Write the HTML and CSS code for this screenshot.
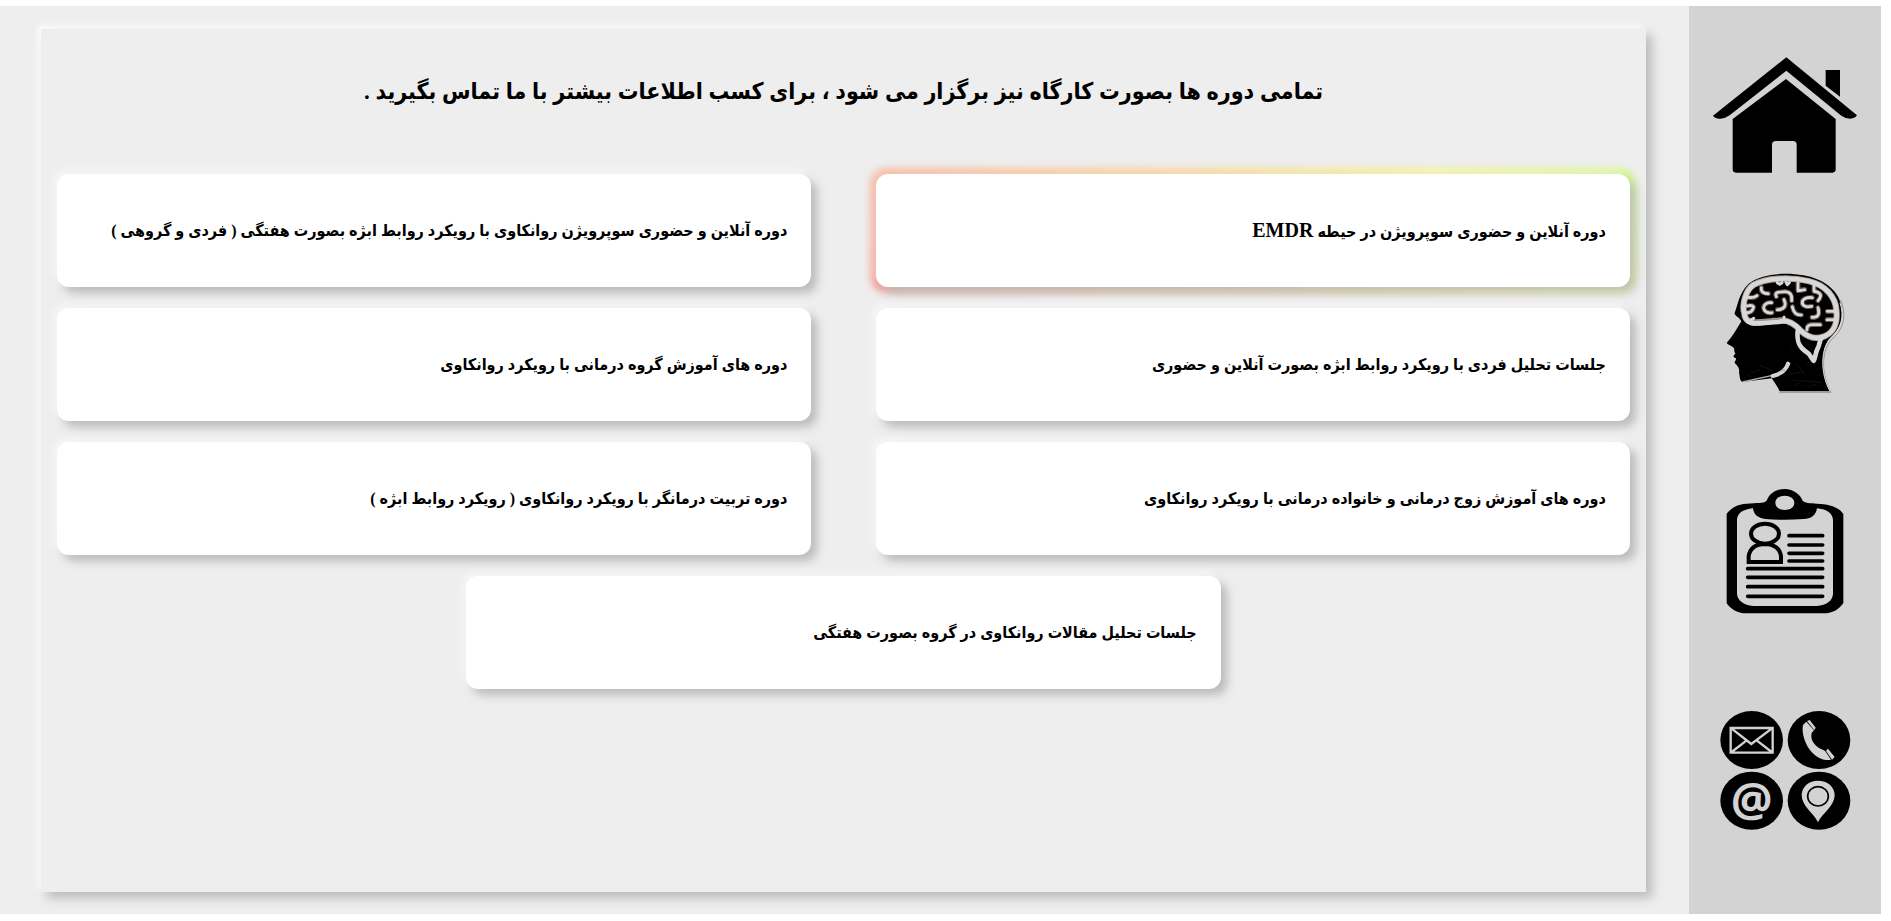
FILE: index.html
```html
<!DOCTYPE html>
<html lang="fa">
<head>
<meta charset="utf-8">
<title>دوره ها</title>
<link rel="stylesheet" href="styles.css">
</head>
<body>
<div class="page">
  <main class="content" dir="rtl">
    <section class="panel">
      <h1 class="title">تمامی دوره ها بصورت کارگاه نیز برگزار می شود ، برای کسب اطلاعات بیشتر با ما تماس بگیرید .</h1>
      <div class="cards">
        <article class="card card-active"><h2 class="card-text">دوره آنلاین و حضوری سوپرویژن در حیطه <span class="latin">EMDR</span></h2></article>
        <article class="card"><h2 class="card-text">دوره آنلاین و حضوری سوپرویژن روانکاوی با رویکرد روابط ابژه بصورت هفتگی ( فردی و گروهی )</h2></article>
        <article class="card"><h2 class="card-text">جلسات تحلیل فردی با رویکرد روابط ابژه بصورت آنلاین و حضوری</h2></article>
        <article class="card"><h2 class="card-text">دوره های آموزش گروه درمانی با رویکرد روانکاوی</h2></article>
        <article class="card"><h2 class="card-text">دوره های آموزش زوج درمانی و خانواده درمانی با رویکرد روانکاوی</h2></article>
        <article class="card"><h2 class="card-text">دوره تربیت درمانگر با رویکرد روانکاوی ( رویکرد روابط ابژه )</h2></article>
        <article class="card"><h2 class="card-text">جلسات تحلیل مقالات روانکاوی در گروه بصورت هفتگی</h2></article>
      </div>
    </section>
  </main>
  <nav class="sidebar">
    <a class="nav-link" href="#home" aria-label="خانه">
      <svg class="icon" viewBox="99 165 432 360">
        <path d="M319 172 531 346Q524 356 511 356Q496 356 484 347L319 212 149 346Q134 357 118 356Q104 355 99 347Z"/>
        <path d="M318 237 467 357V508Q467 518 457 518H350V434Q350 423 339 423H288Q276 423 276 434V518H168Q158 518 158 508V357Z"/>
        <path d="M437 210H480V290L437 257Z"/>
      </svg>
    </a>
    <a class="nav-link" href="#courses" aria-label="دوره ها">
      <svg class="icon" viewBox="99 69 432 360">
        <defs>
          <path id="folds" d="M244 113Q241 130 265 131M289 140Q282 125 305 126Q338 120 335 152M275 158C241 155 245 194 276 188M312 149C322 170 309 179 292 179M354 98V122L374 119M402 106V124Q434 129 414 152M397 143C356 138 358 178 395 169M337 170Q342 196 364 195M414 173Q423 204 396 202M231 137Q222 145 202 142M200 168Q226 163 219 176Q215 187 201 188M464 184H442M462 209H441M381 239Q380 224 395 224H421"/>
        </defs>
        <path d="M184 214C178 200 162 198 164 188C172 172 176 130 205 102C240 72 315 65 370 76C430 86 472 120 482 160C494 205 480 235 452 262C420 292 424 380 450 424H299C293 412 284 397 275 385L187 396C178 390 180 380 177 366C180 355 172 347 166 341C160 337 170 330 168 325C159 322 158 318 166 311C160 300 166 296 158 291C148 285 140 281 140 279C158 258 170 238 184 214Z"/>
        <path class="edge" d="M482 150C500 195 492 232 462 262C424 290 420 370 453 427H298"/>
        <path class="edge-light" d="M480 158C494 200 482 238 456 262C420 290 420 370 450 424"/>
        <use class="fold fold-rim" href="#folds"/>
        <use class="fold fold-shade" href="#folds"/>
        <path class="brain-rim" d="M193 190C185 165 197 120 220 105C255 84 330 80 385 93C440 105 467 145 469 180C474 220 461 252 424 262C400 268 382 260 364 244C345 222 325 207 295 212C260 213 222 225 204 212Q194 205 193 190Z"/>
        <path class="brain-line" d="M193 190C185 165 197 120 220 105C255 84 330 80 385 93C440 105 467 145 469 180C474 220 461 252 424 262C400 268 382 260 364 244C345 222 325 207 295 216C260 217 222 227 204 214Q194 205 193 190Z"/>
        <path class="brain-line" d="M353 244C350 275 357 292 378 305C392 312 394 326 401 332C407 325 405 310 413 295C420 285 416 275 425 263"/>
        <use class="fold" href="#folds"/>
        <path class="fold" d="M292 98 299 103 306 98M318 97 322 104 328 98M213 210 221 205M312 208V201"/>
        <path class="jaw-rim" d="M187 396L274 377C305 370 325 356 330 339"/>
        <path class="jaw" d="M278 378C302 373 318 360 324 341"/>
        <path class="scratch" d="M212 368L240 360M237 346L278 361M298 356L322 366M330 294L340 304M335 390L380 394 425 397M350 340L378 376M310 376L370 365M378 345L392 330M346 405L360 400M200 375L215 380M386 410L410 402"/>
      </svg>
    </a>
    <a class="nav-link" href="#resume" aria-label="رزومه">
      <svg class="icon" viewBox="99 63 432 360">
        <path fill-rule="evenodd" d="M140 131C160 106 184 101 222 100C246 99 259 98 262 88C270 68 290 57 314 57C341 57 362 75 367 91C373 100 391 100 411 101C448 103 475 110 490 132V400C476 418 462 427 440 430H190C168 427 150 414 140 400ZM219 115C186 119 172 130 171 150V372C173 392 190 405 220 408H410C440 405 457 394 459 372V150C458 130 441 118 411 115C408 136 393 147 370 147C333 150 293 150 256 147C234 144 221 135 219 115ZM314 77C298 77 286 86 286 98C286 111 298 120 314 120C331 120 343 111 343 98C343 86 331 77 314 77Z"/>
        <g class="sheet-figure"><ellipse cx="255" cy="191" rx="42" ry="30"/><path d="M206 276V258Q212 223 255 222Q298 224 303 258V276Z"/></g>
        <path class="sheet-lines" d="M327 197H428M327 225H428M327 250H428M327 273H428M203 296H428M203 322H428M203 350H428M203 379H428"/>
      </svg>
    </a>
    <a class="nav-link" href="#contact" aria-label="تماس با ما">
      <svg class="icon" viewBox="99 57 432 360">
        <ellipse cx="215" cy="150" rx="94" ry="87"/><ellipse cx="417" cy="150" rx="94" ry="87"/>
        <ellipse cx="215" cy="332" rx="94" ry="87"/><ellipse cx="417" cy="332" rx="94" ry="87"/>
        <path class="mail" d="M152 114H278V188H152ZM155 116 214 162 275 116M155 186 200 151M275 186 230 151"/>
        <path class="light" d="M369 105 379 95 402 121 395 129C389 150 406 172 430 180L436 184 453 209C435 214 405 204 385 173C371 150 365 123 369 105ZM381 93 389 90 407 113 403 120ZM438 182 444 176 464 201 456 209Z"/>
        <text class="at" x="215" y="377" text-anchor="middle">@</text>
        <path class="light" d="M414 397C402 371 365 348 365 316C365 290 387 272 414 272C442 272 464 290 464 316C464 348 426 371 414 397Z"/>
        <ellipse class="pin-ring" cx="414" cy="319" rx="31" ry="29"/>
      </svg>
    </a>
  </nav>
</div>
</body>
</html>
```
FILE: styles.css
```css
* { box-sizing: border-box; }

body {
  margin: 0;
  padding: 6px 10px 7px 0;
  background: #fff;
  color: #000;
  font-family: "Liberation Serif", "DejaVu Sans Condensed", "DejaVu Sans", serif;
}

.page {
  display: flex;
  min-height: calc(100vh - 13px);
  background: #eee;
}

.content {
  flex: 1;
  display: flex;
  padding: 23px 43px 22px 41px;
}

.panel {
  flex: 1;
  background: #eee;
  box-shadow: 6px 6px 10px #b8bcba, -3px -3px 6px #fff;
}

.title {
  margin: 0;
  padding: 43px 16px 62px;
  font-size: 23px;
  line-height: 40px;
  text-align: center;
}

.cards {
  display: flex;
  flex-wrap: wrap;
  justify-content: center;
  gap: 21px 4%;
  position: relative;
  z-index: 0;
}

.card {
  position: relative;
  display: flex;
  align-items: center;
  width: 47%;
  min-height: 113px;
  padding: 16px 24px;
  border-radius: 12px;
  background: #fff;
  box-shadow: 6px 6px 10px rgba(140, 148, 144, 0.55), -3px -3px 8px rgba(255, 255, 255, 0.7);
}

.card-active::before {
  content: "";
  position: absolute;
  z-index: -1;
  inset: -4px;
  border-radius: 14px;
  background: linear-gradient(45deg, #ff2d1a, #ffa500 50%, #f5f500 77%, #a8ff00);
  filter: blur(4px);
  opacity: 0.6;
}

.card-active {
  box-shadow: 6px 6px 10px rgba(186, 190, 188, 0.9), -3px -3px 8px rgba(255, 255, 255, 0.5);
}

.card-text {
  margin: 0;
  font-size: 16px;
  line-height: 24px;
}

.latin { font-size: 20px; }

.sidebar {
  display: flex;
  flex-direction: column;
  align-items: center;
  gap: 98px;
  width: 192px;
  padding: 49px 24px;
  background: #d3d3d3;
}

.nav-link { display: block; color: #000; }

.icon {
  display: block;
  width: 144px;
  height: 120px;
  overflow: visible;
}

.edge { fill: none; stroke: #a08f85; stroke-width: 3px; }
.edge-light { fill: none; stroke: #dcdcdc; stroke-width: 3px; }
.brain-line { fill: none; stroke: #d8d8d8; stroke-width: 14px; stroke-linejoin: round; stroke-linecap: round; }
.brain-rim { fill: none; stroke: #a3968e; stroke-width: 19px; }
.fold { fill: none; stroke: #d8d8d8; stroke-width: 9px; stroke-linecap: round; stroke-linejoin: round; }
.fold-rim { stroke: #8d817a; stroke-width: 14px; }
.fold-shade { stroke: #2c2521; stroke-width: 12px; }
.jaw { fill: none; stroke: #d3d3d3; stroke-width: 12px; stroke-linecap: round; }
.jaw-rim { fill: none; stroke: #b9aaa2; stroke-width: 4px; }
.scratch { fill: none; stroke: #333; stroke-width: 1px; }

.sheet-figure { fill: none; stroke: #000; stroke-width: 12px; }
.sheet-lines { fill: none; stroke: #000; stroke-width: 11px; stroke-linecap: round; }

.mail { fill: none; stroke: #d3d3d3; stroke-width: 7px; }
.light { fill: #d3d3d3; }
.at { fill: #d3d3d3; font: bold 140px "Open Sans", "Noto Sans", sans-serif; }
.pin-ring { fill: none; stroke: #000; stroke-width: 5px; }
```
